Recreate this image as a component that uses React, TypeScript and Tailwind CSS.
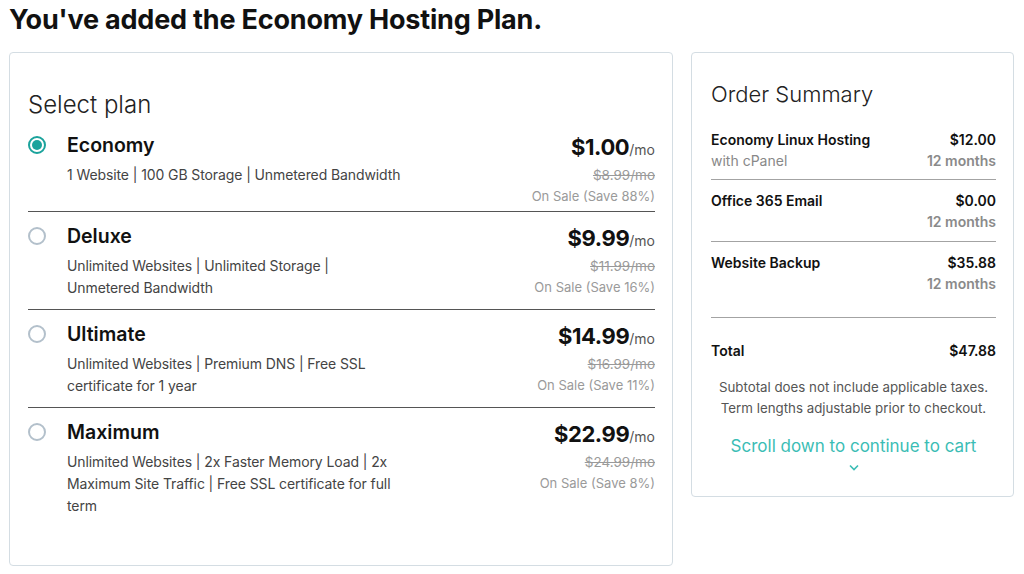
import React, {FC} from 'react';

interface Plan {
  name: string;
  lines: string[];
  price: string;
  was: string;
  save: string;
  selected?: boolean;
}

const plans: Plan[] = [
  {
    name: 'Economy',
    lines: ['1 Website | 100 GB Storage | Unmetered Bandwidth'],
    price: '$1.00',
    was: '$8.99/mo',
    save: 'On Sale (Save 88%)',
    selected: true,
  },
  {
    name: 'Deluxe',
    lines: ['Unlimited Websites | Unlimited Storage |', 'Unmetered Bandwidth'],
    price: '$9.99',
    was: '$11.99/mo',
    save: 'On Sale (Save 16%)',
  },
  {
    name: 'Ultimate',
    lines: ['Unlimited Websites | Premium DNS | Free SSL', 'certificate for 1 year'],
    price: '$14.99',
    was: '$16.99/mo',
    save: 'On Sale (Save 11%)',
  },
  {
    name: 'Maximum',
    lines: [
      'Unlimited Websites | 2x Faster Memory Load | 2x',
      'Maximum Site Traffic | Free SSL certificate for full',
      'term',
    ],
    price: '$22.99',
    was: '$24.99/mo',
    save: 'On Sale (Save 8%)',
  },
];

const summary = [
  {name: 'Economy Linux Hosting', sub: 'with cPanel', price: '$12.00', term: '12 months'},
  {name: 'Office 365 Email', sub: '', price: '$0.00', term: '12 months'},
  {name: 'Website Backup', sub: '', price: '$35.88', term: '12 months'},
];

const Radio: FC<{checked?: boolean}> = ({checked}) => (
  <div
    className={`w-[18px] h-[18px] rounded-full border-2 flex items-center justify-center shrink-0 mt-[3px] ${
      checked ? 'border-[#1ba39c]' : 'border-[#b3c0cb]'
    }`}
  >
    {checked && <div className="w-[10px] h-[10px] rounded-full bg-[#1ba39c]"/>}
  </div>
);

const PlanRow: FC<{plan: Plan; last?: boolean}> = ({plan, last}) => (
  <div
    className={`plan-row flex pt-3 ${last ? '' : 'border-b border-[#555]'} ${
      plan.selected ? 'pb-[5px]' : 'pb-[10px]'
    }`}
  >
    <div className="flex gap-[21px] grow">
      <Radio checked={plan.selected}/>
      <div className="flex flex-col">
        <h3 className="text-[19.5px] leading-6 font-semibold text-[#111]">{plan.name}</h3>
        <div className="mt-[7px] text-[14px] leading-[22px] tracking-[-0.1px] text-[#444] whitespace-nowrap">
          {plan.lines.map((l) => (
            <p key={l}>{l}</p>
          ))}
        </div>
      </div>
    </div>
    <div className="plan-row__price flex flex-col items-end">
      <p className="leading-7 text-[#111]">
        <span className="text-[22px] font-bold tracking-[-0.4px]">{plan.price}</span>
        <span className="text-[14px] text-[#555]">/mo</span>
      </p>
      <p className="text-[13.5px] leading-[22px] text-[#9a9a9a] line-through">{plan.was}</p>
      <p className="text-[13px] leading-5 text-[#9a9a9a]">{plan.save}</p>
    </div>
  </div>
);

const App: FC = () => {
  return (
    <div className="w-[1024px] h-[574px] bg-white overflow-hidden font-['Inter',sans-serif] text-[#111]">
      <h1 className="pl-[9px] pt-[4px] text-[27px] leading-8 font-bold tracking-[-0.2px]">
        You've added the Economy Hosting Plan.
      </h1>
      <div className="flex gap-[18px] pl-[9px] mt-[16px] items-start">
        <div className="select-plan w-[664px] h-[514px] border border-[#d4dde3] rounded-[4px] pt-[36px] pl-[18px] pr-[17px]">
          <h2 className="text-[24px] leading-8 font-light text-[#222]">Select plan</h2>
          {plans.map((p, i) => (
            <PlanRow key={p.name} plan={p} last={i === plans.length - 1}/>
          ))}
        </div>
        <div className="order-summary w-[323px] h-[445px] border border-[#d4dde3] rounded-[4px] pt-[27px] pl-[19px] pr-[17px]">
          <h2 className="text-[22px] leading-7 font-light text-[#222]">Order Summary</h2>
          <div className="mt-[21px]">
            {summary.map((s, i) => (
              <div
                key={s.name}
                className={`flex justify-between border-b border-[#a3a3a3] ${i === 0 ? 'pb-[8px]' : i === 1 ? 'pt-[10px] pb-[9px]' : 'pt-[10px] pb-[23px]'}`}
              >
                <div className="flex flex-col">
                  <p className="text-[14px] leading-[21px] font-semibold text-[#111]">{s.name}</p>
                  <p className="text-[14px] leading-[21px] text-[#888]">{s.sub}</p>
                </div>
                <div className="flex flex-col items-end">
                  <p className="text-[14px] leading-[21px] font-semibold text-[#111]">{s.price}</p>
                  <p className="text-[14px] leading-[21px] font-semibold text-[#8a8a8a]">{s.term}</p>
                </div>
              </div>
            ))}
            <div className="flex justify-between pt-[22px]">
              <p className="text-[14px] leading-[21px] font-semibold">Total</p>
              <p className="text-[14px] leading-[21px] font-semibold">$47.88</p>
            </div>
            <div className="mt-[16px] text-center text-[13.3px] leading-[21px] text-[#555]">
              <p>Subtotal does not include applicable taxes.</p>
              <p>Term lengths adjustable prior to checkout.</p>
            </div>
            <div className="mt-[14px] flex flex-col items-center text-[#3bbdb5]">
              <p className="text-[17px] leading-[26px]">Scroll down to continue to cart</p>
              <svg width="10" height="7" viewBox="0 0 10 7" className="mt-[5px]">
                <path d="M1 1.5 L5 5.5 L9 1.5" fill="none" stroke="#3bbdb5" strokeWidth="1.6"/>
              </svg>
            </div>
          </div>
        </div>
      </div>
    </div>
  );
};

export default App;
